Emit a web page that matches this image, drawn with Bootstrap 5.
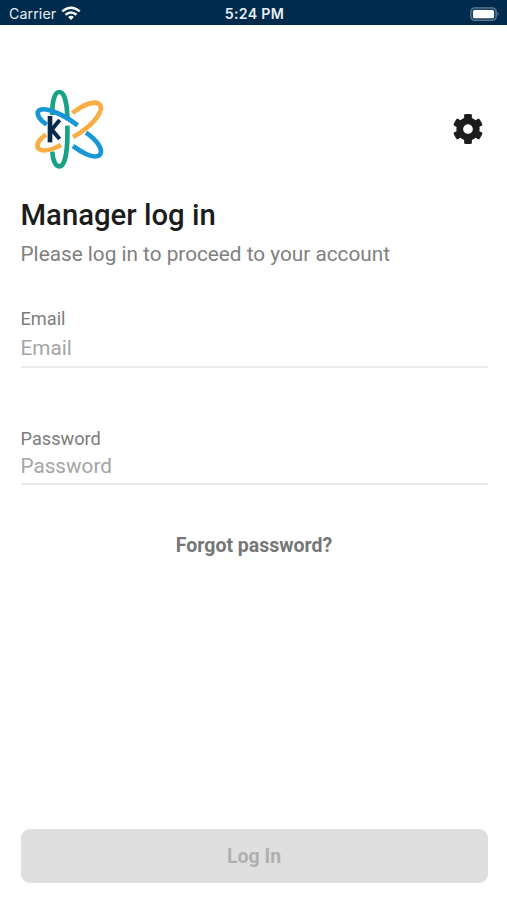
<!DOCTYPE html>
<html lang="en">
<head>
<meta charset="utf-8">
<meta name="viewport" content="width=device-width, initial-scale=1">
<title>Manager log in</title>
<link href="https://cdn.jsdelivr.net/npm/bootstrap@5.3.0/dist/css/bootstrap.min.css" rel="stylesheet">
<style>
body{font-family:Roboto,"Liberation Sans",sans-serif;color:#1c1c1c;background:#fff}
.screen{height:900px}
.statusbar{height:25px;background:#002b4d;color:#e8eef3;font:400 14.2px/24px Inter,"Liberation Sans",sans-serif;padding:2px 7px 0 9px}
.statusbar .side{flex:1 1 0;min-width:0}
.carrier{letter-spacing:.1px}
.wifi{margin-left:5px}
.clock{font-weight:600;font-size:14.2px;letter-spacing:.3px}
.content{padding:54px 19.5px 17px 20.5px}
.brand{height:100px;margin-bottom:1px;padding:0 1.5px 0 4.5px}
.title{font-size:29.3px;line-height:36px;font-weight:500;margin:17px 0 0}
.subtitle{font-size:20.75px;line-height:28px;color:#808080;margin:7px 0 0}
.field-label{font-size:18.2px;line-height:22px;color:#7c7c7c;display:block}
.field-input,.field-input:focus{font-size:20.7px;line-height:30px;height:38px;padding:2px 0 4px;border-bottom:2px solid #ececec;box-shadow:none;color:#444;border-radius:0}
.field-input::placeholder{color:#a5a5a5;opacity:1}
.email-group{margin-top:40px}
.password-group{margin-top:60px}
.password-group .field-input{height:35px;padding:0 0 3px}
.forgot{font-size:19.5px;line-height:24px;font-weight:700;color:#767676;margin-top:49px}
.login-btn,.login-btn:disabled{height:54px;border-radius:9px;background:#dfdfdf;border:0;color:#b0b0b0;font-size:19.5px;font-weight:700;opacity:1;padding-top:8px}
</style>
</head>
<body>
<div class="screen d-flex flex-column overflow-hidden">
  <header class="statusbar d-flex align-items-center flex-shrink-0">
    <div class="side d-flex align-items-center">
      <span class="carrier">Carrier</span>
      <svg class="wifi" width="20" height="15" viewBox="0 0 20 15" fill="none" stroke="#fff" stroke-width="2.5"><path d="M1.300 5.400Q10-1.800 18.700 5.400"/><path d="M4.500 8.800Q10 4.300 15.500 8.800"/><path d="M10 14l-2.900-3q2.900-2.300 5.800 0z" fill="#fff" stroke="none"/></svg>
    </div>
    <span class="clock">5:24 PM</span>
    <div class="side d-flex align-items-center justify-content-end">
      <svg width="30" height="14" viewBox="0 0 30 14"><rect x=".8" y=".8" width="25.4" height="12.6" rx="3.8" fill="#1d4563" stroke="#5f7b91" stroke-width="1.3"/><rect x="3" y="2.9" width="21" height="8.4" rx="1.6" fill="#fff"/><path d="M27.600 4.800q2 2.200 0 4.400z" fill="#71899c"/></svg>
    </div>
  </header>
  <main class="content flex-grow-1 d-flex flex-column">
    <div class="brand d-flex justify-content-between align-items-center">
      <svg width="90" height="100" viewBox="0 -3 270 300" fill="none" stroke-width="14">
        <g stroke="#18a287"><path d="M82 105C81 66 88 36 103 36C119 36 126 72 127 112"/><path d="M127 137C129 205 122 259 103 259C90 259 83 238 82 215"/></g>
        <g stroke="#f9ae45"><path d="M142 99C174 75 205 63 221 71C239 82 218 116 188 141C174 153 160 163 144 171"/><path d="M63 164C42 178 32 194 40 205C51 216 77 211 108 195"/></g>
        <g stroke="#1797d5"><path d="M65 134C40 117 32 98 43 91C61 80 114 102 158 136"/><path d="M183 158C215 180 236 208 225 224C210 237 177 222 144 198"/></g>
        <path d="M75 108v79" stroke="#062b4b" stroke-width="14"/>
        <path d="M104 120L80 149L104 177" stroke="#062b4b" stroke-width="12"/>
      </svg>
      <svg width="36" height="36" viewBox="-41 -41 594 594" fill="#1c1c1c"><path d="M487.400 315.700l-42.600-24.600c4.300-23.200 4.300-47 0-70.200l42.600-24.600c4.900-2.800 7.100-8.600 5.500-14-11.100-35.600-30-67.800-54.700-94.600-3.800-4.100-10-5.100-14.800-2.300L380.800 110c-17.900-15.400-38.500-27.300-60.800-35.100V25.800c0-5.600-3.900-10.500-9.400-11.700-36.700-8.200-74.300-7.800-109.200 0-5.500 1.200-9.400 6.100-9.400 11.700V75c-22.200 7.900-42.800 19.800-60.800 35.100L88.700 85.500c-4.900-2.800-11-1.900-14.800 2.300-24.700 26.700-43.600 58.900-54.700 94.600-1.700 5.400.6 11.200 5.500 14L67.300 221c-4.300 23.200-4.300 47 0 70.200l-42.600 24.600c-4.900 2.800-7.100 8.600-5.500 14 11.100 35.600 30 67.800 54.700 94.600 3.800 4.100 10 5.100 14.800 2.300l42.600-24.600c17.900 15.400 38.500 27.300 60.800 35.100v49.200c0 5.600 3.900 10.500 9.400 11.700 36.700 8.200 74.300 7.800 109.200 0 5.500-1.200 9.400-6.100 9.400-11.700v-49.200c22.200-7.900 42.800-19.800 60.800-35.100l42.600 24.600c4.900 2.800 11 1.900 14.800-2.300 24.700-26.700 43.600-58.900 54.700-94.600 1.500-5.500-.7-11.300-5.600-14.100zM256 336c-44.100 0-80-35.900-80-80s35.900-80 80-80 80 35.900 80 80-35.900 80-80 80z"/></svg>
    </div>
    <h1 class="title">Manager log in</h1>
    <p class="subtitle">Please log in to proceed to your account</p>
    <div class="email-group">
      <label class="field-label" for="email">Email</label>
      <input class="form-control-plaintext field-input" id="email" type="email" placeholder="Email">
    </div>
    <div class="password-group">
      <label class="field-label" for="password">Password</label>
      <input class="form-control-plaintext field-input" id="password" type="password" placeholder="Password">
    </div>
    <a class="forgot text-decoration-none align-self-center" href="#">Forgot password?</a>
    <button class="btn login-btn w-100 mt-auto" type="button" disabled>Log In</button>
  </main>
</div>
<script src="https://cdn.jsdelivr.net/npm/bootstrap@5.3.0/dist/js/bootstrap.bundle.min.js"></script>
</body>
</html>
